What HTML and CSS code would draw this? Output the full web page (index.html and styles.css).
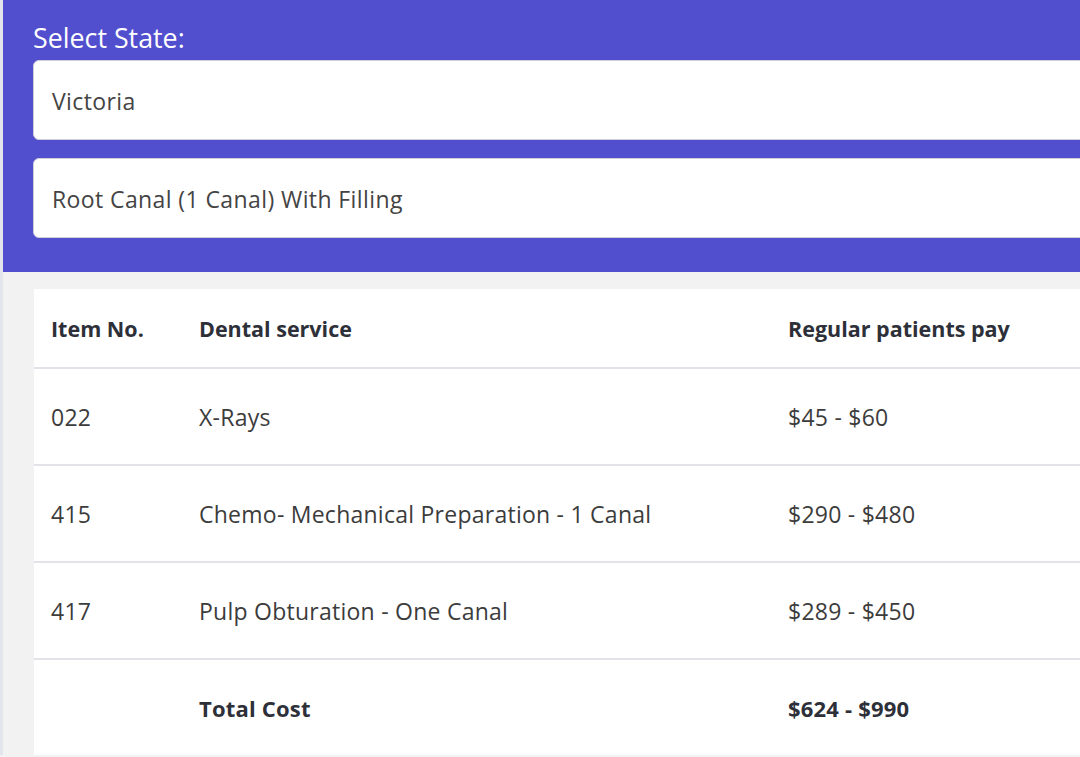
FILE: index.html
```html
<!DOCTYPE html>
<html lang="en">
<head>
<meta charset="utf-8">
<title>Dental cost</title>
<link rel="stylesheet" href="styles.css">
</head>
<body>
<header class="top">
  <label class="label">Select State:</label>
  <div class="field">Victoria</div>
  <div class="field">Root Canal (1 Canal) With Filling</div>
</header>
<main class="content">
  <table class="costs">
    <thead>
      <tr><th class="c1">Item No.</th><th class="c2">Dental service</th><th class="c3">Regular patients pay</th></tr>
    </thead>
    <tbody>
      <tr><td>022</td><td>X-Rays</td><td>$45 - $60</td></tr>
      <tr><td>415</td><td>Chemo- Mechanical Preparation - 1 Canal</td><td>$290 - $480</td></tr>
      <tr><td>417</td><td>Pulp Obturation - One Canal</td><td>$289 - $450</td></tr>
      <tr class="total"><td></td><td>Total Cost</td><td>$624 - $990</td></tr>
    </tbody>
  </table>
</main>
</body>
</html>
```
FILE: styles.css
```css
html, body {
  margin: 0;
  padding: 0;
}
body {
  width: 1120px;
  font-family: "Open Sans", "Noto Sans", sans-serif;
  background: #f2f2f2;
  border-left: 3px solid #e4e4ec;
  overflow: hidden;
}
.top {
  background: #524fcf;
  margin-left: -3px;
  padding: 23px 0 34px 33px;
  display: flex;
  flex-direction: column;
  gap: 18px;
}
.label {
  color: #ffffff;
  font-size: 26.8px;
  line-height: 30px;
  margin-bottom: -11px;
}
.field {
  background: #fff;
  border: 1px solid #cfcfd8;
  border-radius: 6px;
  height: 80px;
  box-sizing: border-box;
  display: flex;
  align-items: center;
  padding: 2px 0 0 18px;
  font-size: 23px;
  letter-spacing: 0.4px;
  color: #444;
}
.content {
  padding: 17px 0 0 31px;
}
.costs {
  width: 1100px;
  border-collapse: collapse;
  background: #fff;
  font-size: 23px;
  letter-spacing: 0.25px;
  color: #3c3c3c;
}
.costs th {
  text-align: left;
  font-weight: 700;
  font-size: 21.5px;
  letter-spacing: 0;
  color: #2d3038;
  height: 78px;
  padding: 0 0 0 17px;
  border-bottom: 2px solid #e2e2e8;
}
.costs td {
  height: 95px;
  padding: 0 0 0 17px;
  border-bottom: 2px solid #e2e2e8;
}
.costs .c1 { width: 131px; }
.costs .c2 { width: 572px; }
.costs .total td {
  font-weight: 700;
  font-size: 22px;
  letter-spacing: 0.2px;
  color: #2d3038;
  border-bottom: none;
}
```
